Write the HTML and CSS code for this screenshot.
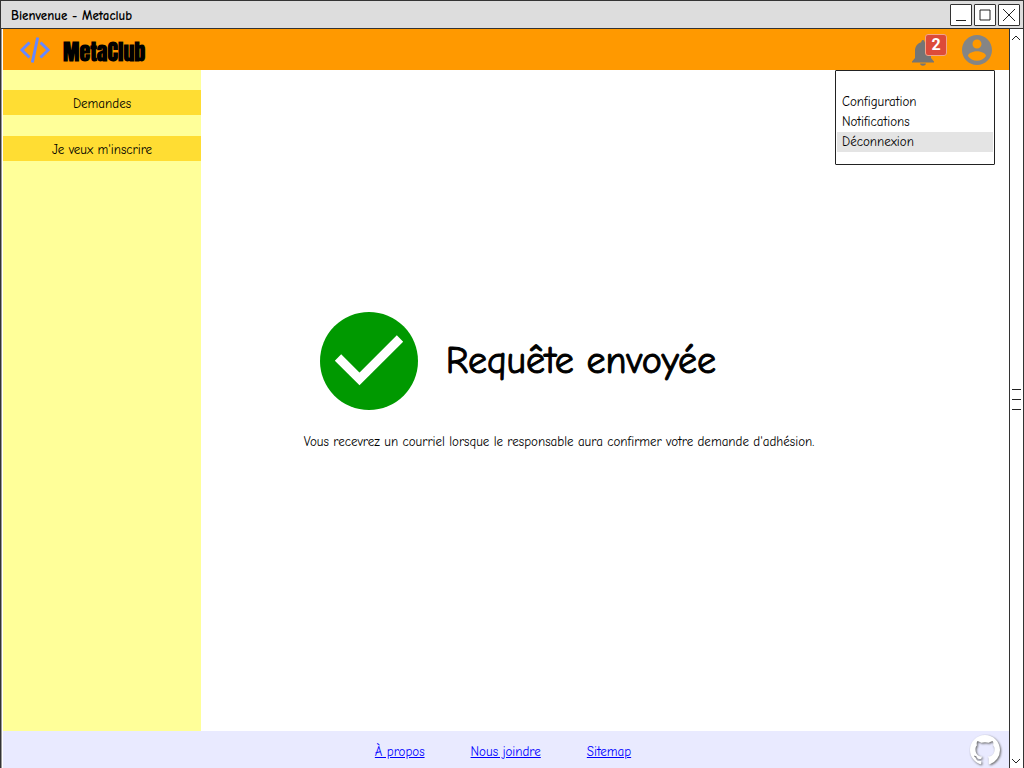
FILE: index.html
```html
<!DOCTYPE html>
<html lang="fr">
<head>
<meta charset="utf-8">
<meta name="viewport" content="width=device-width, initial-scale=1">
<title>Bienvenue - Metaclub</title>
<link rel="stylesheet" href="styles.css">
</head>
<body>
<div class="window">
  <div class="titlebar">
    <span class="titlebar-text">Bienvenue - Metaclub</span>
    <div class="window-buttons">
      <button class="window-button" type="button" aria-label="Réduire"><svg viewBox="0 0 20 20"><path d="M5 15.500H15"/></svg></button>
      <button class="window-button" type="button" aria-label="Agrandir"><svg viewBox="0 0 20 20"><path d="M5 5H15V15H5Z"/></svg></button>
      <button class="window-button" type="button" aria-label="Fermer"><svg viewBox="0 0 20 20"><path d="M4 4L16 16M16 4L4 16"/></svg></button>
    </div>
  </div>
  <div class="viewport">
    <div class="page">
      <header class="header">
        <svg class="logo" viewBox="0 0 30 26"><path d="M9.500 5.500L1.800 13L9.500 20.500M20.500 5.500L28.200 13L20.500 20.500M17.700 .5L12.300 25.500"/></svg>
        <span class="brand">MetaClub</span>
        <div class="header-actions">
          <button class="icon-button bell" type="button" aria-label="Notifications">
            <svg viewBox="0 0 22 26"><path d="M11 0C9.700 0 9.300 1 9.300 2.300C5 3.500 3 7 3 11V18L0 21.500V22.500H22V21.500L19 18V11C19 7 17 3.500 12.700 2.300C12.700 1 12.300 0 11 0ZM8 23.500C8.500 26.500 13.500 26.500 14 23.500Z"/></svg>
            <span class="badge">2</span>
          </button>
          <button class="icon-button avatar" type="button" aria-label="Compte">
            <svg viewBox="2 2 20 20"><path d="M12 2C6.480 2 2 6.480 2 12s4.480 10 10 10 10-4.480 10-10S17.520 2 12 2zm0 3c1.660 0 3 1.340 3 3s-1.340 3-3 3-3-1.340-3-3 1.340-3 3-3zm0 14.200c-2.500 0-4.710-1.280-6-3.220.03-1.990 4-3.080 6-3.080 1.990 0 5.970 1.090 6 3.080-1.290 1.940-3.500 3.220-6 3.220z"/></svg>
          </button>
        </div>
        <nav class="menu" aria-label="Compte">
          <a class="menu-item" href="#configuration">Configuration</a>
          <a class="menu-item" href="#notifications">Notifications</a>
          <a class="menu-item menu-item-active" href="#deconnexion">Déconnexion</a>
        </nav>
      </header>
      <div class="middle">
        <nav class="sidebar" aria-label="Principal">
          <button class="side-button" type="button">Demandes</button>
          <button class="side-button" type="button">Je veux m'inscrire</button>
        </nav>
        <main class="main">
          <div class="message">
            <div class="message-head">
              <svg class="check" viewBox="0 0 98 98"><circle cx="49" cy="49" r="49"/><path d="M18 45.500L39.500 67L80 26.500"/></svg>
              <h1 class="message-title">Requête envoyée</h1>
            </div>
            <p class="message-text">Vous recevrez un courriel lorsque le responsable aura confirmer votre demande d'adhésion.</p>
          </div>
        </main>
      </div>
      <footer class="footer">
        <nav class="footer-links" aria-label="Pied de page">
          <a href="#apropos">À propos</a>
          <a href="#joindre">Nous joindre</a>
          <a href="#sitemap">Sitemap</a>
        </nav>
        <a class="github" href="#github" aria-label="GitHub"><svg viewBox="0 0 16 16"><path d="M8 0C3.580 0 0 3.580 0 8c0 3.540 2.290 6.530 5.470 7.590.4.07.55-.17.55-.38 0-.19-.01-.82-.01-1.490-2.010.37-2.530-.49-2.690-.94-.09-.23-.48-.94-.82-1.130-.28-.15-.68-.52-.01-.53.63-.01 1.080.58 1.230.82.72 1.210 1.870.87 2.330.66.07-.52.28-.87.51-1.070-1.780-.2-3.640-.89-3.640-3.950 0-.87.31-1.590.82-2.150-.08-.2-.36-1.020.08-2.120 0 0 .67-.21 2.200.82.64-.18 1.320-.27 2-.27s1.360.09 2 .27c1.530-1.040 2.200-.82 2.200-.82.44 1.100.16 1.920.08 2.120.51.56.82 1.270.82 2.150 0 3.070-1.870 3.750-3.650 3.950.29.25.54.73.54 1.480 0 1.070-.01 1.930-.01 2.200 0 .21.15.46.55.38A8.010 8.010 0 0 0 16 8c0-4.420-3.580-8-8-8z"/></svg></a>
      </footer>
    </div>
    <div class="scrollbar">
      <button class="scroll-arrow" type="button" aria-label="Défiler vers le haut"><svg viewBox="0 0 10 6"><path d="M1 5L5 1L9 5"/></svg></button>
      <div class="scroll-grip"></div>
      <button class="scroll-arrow" type="button" aria-label="Défiler vers le bas"><svg viewBox="0 0 10 6"><path d="M1 1L5 5L9 1"/></svg></button>
    </div>
  </div>
</div>
</body>
</html>
```
FILE: styles.css
```css
* {
  box-sizing: border-box;
}

body {
  margin: 0;
  background: #fff;
  color: #000;
  font: 13px/20px "Comic Sans MS", "Comic Neue", "Open Sans", sans-serif;
}

button {
  margin: 0;
  padding: 0;
  border: 0;
  background: none;
  color: inherit;
  font: inherit;
}

svg {
  display: block;
  fill: none;
}

.window {
  display: flex;
  flex-direction: column;
  min-height: 100vh;
  border: 1px solid #333;
  border-bottom: 0;
}

.titlebar {
  display: flex;
  align-items: center;
  justify-content: space-between;
  height: 28px;
  padding: 0 3px 0 10px;
  border-bottom: 1px solid #333;
  background: #ddd;
}

.titlebar-text {
  padding-top: 2px;
  font-weight: 700;
}

.window-buttons {
  display: flex;
  gap: 2px;
}

.window-button {
  width: 22px;
  height: 22px;
  border: 1px solid #333;
  border-radius: 1px;
  background: #fff;
}

.window-button svg {
  width: 20px;
  height: 20px;
  stroke: #222;
}

.viewport {
  display: flex;
  flex: 1;
}

.page {
  display: flex;
  flex: 1;
  flex-direction: column;
  padding-left: 1px;
  border-left: 1px solid #999;
}

.header {
  position: relative;
  display: flex;
  align-items: center;
  height: 41px;
  padding: 0 17px;
  background: #f90;
}

.logo {
  width: 30px;
  height: 26px;
  stroke: #6688ff;
  stroke-width: 3;
}

.brand {
  margin-left: 13px;
  padding-top: 4px;
  font: 900 22px/24px Impact, Anton, "Roboto Condensed", Roboto, sans-serif;
}

.header-actions {
  display: flex;
  align-items: center;
  gap: 15px;
  margin-left: auto;
}

.icon-button {
  position: relative;
}

.bell {
  width: 35px;
  height: 32px;
}

.bell svg {
  width: 22px;
  height: 26px;
  margin-top: 6px;
  fill: #757575;
}

.badge {
  position: absolute;
  top: 0;
  right: 0;
  width: 22px;
  height: 22px;
  border: 1px solid #f2a58a;
  border-radius: 3px;
  background: #dd4b39;
  color: #fff;
  font: 700 16px/20px Roboto, sans-serif;
}

.avatar svg {
  width: 30px;
  height: 30px;
  fill: #858585;
}

.menu {
  position: absolute;
  z-index: 1;
  top: 100%;
  right: 14px;
  width: 160px;
  padding: 21px 1px 12px;
  border: 1px solid #222;
  border-radius: 1px;
  background: #fff;
}

.menu-item {
  display: block;
  padding-left: 5px;
  color: inherit;
  text-decoration: none;
}

.menu-item-active {
  background: #e4e4e4;
}

.middle {
  display: flex;
  flex: 1;
}

.sidebar {
  display: flex;
  flex-direction: column;
  gap: 21px;
  width: 198px;
  padding-top: 20px;
  background: #ff9;
}

.side-button {
  height: 25px;
  padding-top: 2px;
  background: #ffdd33;
}

.main {
  display: flex;
  flex: 1;
  align-items: center;
  justify-content: center;
  padding: 0 92px 38px 0;
}

.message-head {
  display: flex;
  align-items: center;
  gap: 28px;
  padding-left: 16px;
}

.check {
  width: 98px;
  height: 98px;
}

.check circle {
  fill: #090;
}

.check path {
  stroke: #fff;
  stroke-width: 9;
}

.message-title {
  margin: 0;
  font-size: 38px;
  font-weight: 400;
  line-height: 48px;
  -webkit-text-stroke: 1px #000;
}

.message-text {
  margin: 22px 0 0;
}

.footer {
  display: grid;
  grid-template-columns: 1fr auto 1fr;
  align-items: center;
  height: 37px;
  padding: 0 9px 0 3px;
  background: #e9eaff;
}

.footer-links {
  display: flex;
  grid-column: 2;
  gap: 46px;
  padding-top: 4px;
}

.footer-links a {
  color: #00f;
}

.github {
  justify-self: end;
}

.github svg {
  width: 30px;
  height: 30px;
  fill: #fff;
  filter: drop-shadow(1px 1px 1px #666);
}

.scrollbar {
  display: flex;
  flex-direction: column;
  align-items: center;
  justify-content: space-between;
  width: 14px;
  padding: 6px 0 4px;
  border-right: 1px solid #fff;
  border-left: 1px solid #333;
}
 
.scroll-arrow svg {
  width: 10px;
  height: 6px;
  stroke: #222;
}

.scroll-grip {
  width: 9px;
  height: 21px;
  border-top: 1px solid #222;
  border-bottom: 1px solid #222;
  background: linear-gradient(#222, #222) center / 100% 1px no-repeat;
}
```
